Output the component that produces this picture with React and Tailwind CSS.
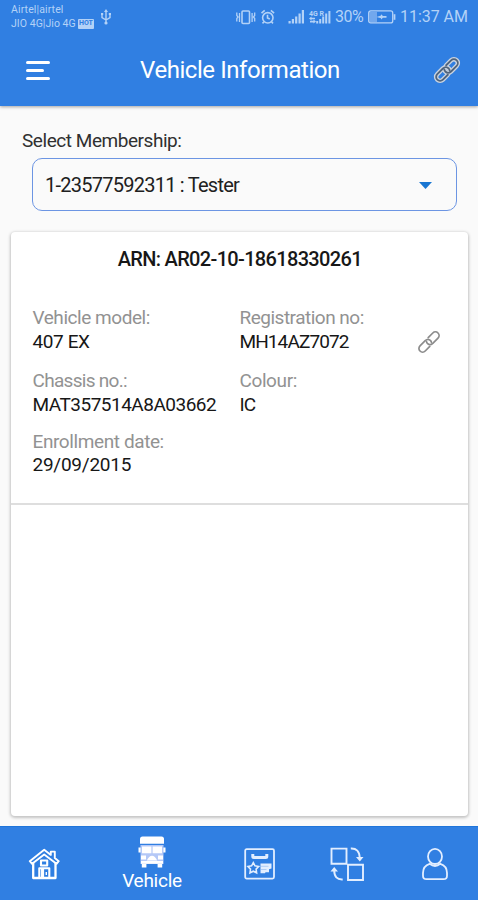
const LinkIcon = ({ className }) => (
  <svg viewBox="0 0 24 24" className={className} fill="none" stroke="currentColor" strokeWidth="1.7" strokeLinecap="round">
    <path d="M11.2 7.6 15.8 3a3.6 3.6 0 0 1 5.2 5.2l-5.2 5.2q-2.9 2.6-5.4 0-.8-.9-.9-1.9" />
    <path d="M12.8 16.4 8.2 21A3.6 3.6 0 0 1 3 15.8l5.2-5.2q2.9-2.6 5.4 0 .8.9.9 1.9" />
  </svg>
);

const OutlinedLinkIcon = () => (
  <svg viewBox="-1 -1 26 26" className="h-7 w-7" fill="none" strokeLinecap="round">
    {[
      ["#ccd5e0", 4.2],
      ["#50647c", 1.7],
    ].map(([color, width]) => (
      <g key={color} stroke={color} strokeWidth={width}>
        <path d="M11.2 7.6 15.8 3a3.6 3.6 0 0 1 5.2 5.2l-5.2 5.2q-2.9 2.6-5.4 0-.8-.9-.9-1.9" />
        <path d="M12.8 16.4 8.2 21A3.6 3.6 0 0 1 3 15.8l5.2-5.2q2.9-2.6 5.4 0 .8.9.9 1.9" />
      </g>
    ))}
  </svg>
);

const StatusIcons = () => (
  <>
    <svg viewBox="0 0 42 18" className="h-[18px] w-[42px]" fill="none" stroke="currentColor" strokeWidth="1.6">
      <rect x="8" y="3" width="7.5" height="12.5" rx="1" />
      <path d="M5.5 5v9M18.1 5v9M2.8 4.5v3L4 9l-1.2 1.5v3M20.7 4.5v3L19.5 9l1.2 1.5v3" strokeWidth="1.3" />
      <circle cx="33.8" cy="9.8" r="5.2" />
      <path d="M33.5 6.8V10l2.3 1M27.5 5.2l3.2-2.8M40.1 5.2l-3.2-2.8M30 13.8l-1.5 1.6M37.5 13.8l1.5 1.6" />
    </svg>
    <svg viewBox="0 0 44 18" className="ml-[11px] h-[18px] w-[44px]" fill="currentColor">
      <path d="M1.5 13h2.2v2.5H1.5zM4.8 11H7v4.5H4.8zM8.1 8.5h2.2v7H8.1zM11.5 5.5h2.2v10h-2.2zM14.8 2H17v13.5h-2.2z" />
      <path d="M29.2 13h2v2.5h-2zM32.2 11h2v4.5h-2zM35.2 8.5h2v7h-2zM38.2 5.5h2v10h-2zM41.4 3h2v12.5h-2z" />
      <path d="m22 10.5 2.5-2v1.2H28v1.6h-3.5v1.2zM29 13.5l-2.5-2v1.3H23v1.6h3.5v1.2z" />
      <text x="22" y="7.5" fontSize="7.5" fontWeight="bold" textLength="15" lengthAdjust="spacingAndGlyphs">4G R</text>
    </svg>
  </>
);

const UsbIcon = () => (
  <svg viewBox="0 0 12 16" className="h-4 w-3" fill="none" stroke="currentColor" strokeWidth="1.4">
    <path d="M6 2v12M2 5v3.5L6 11l4-2.5V5" />
    <path d="M6 0 4 3h4zM1 4h2.2v2H1zM8.8 4H11v2H8.8z" fill="currentColor" stroke="none" />
    <circle cx="6" cy="14" r="1.6" fill="currentColor" stroke="none" />
  </svg>
);

const BatteryIcon = () => (
  <svg viewBox="0 0 28 14" className="ml-[4px] h-[14px] w-[28px]" fill="none" stroke="currentColor" strokeWidth="1.3">
    <rect x="0.7" y="0.9" width="24" height="12" rx="2" />
    <path d="M1.5 2H9v10H1.5z" fill="currentColor" fillOpacity="0.5" stroke="none" />
    <path d="M26.5 4.2v5.6" strokeWidth="1.8" />
    <path d="M8.5 7 13 5.6V4.2l2 1.8h3.5v1.8H15l-2 1.8V8.3z" fill="currentColor" stroke="none" />
  </svg>
);

const HomeIcon = () => (
  <svg viewBox="0 0 32 32" className="h-8 w-8" fill="none" stroke="currentColor" strokeWidth="1.9" strokeLinejoin="round">
    <path d="M5.2 15V30h22.3V15" strokeWidth="2.3" />
    <path d="M16.2 1.8 1.8 13.2l2.3 2.6L16.2 6.4l12.3 9.4 2.2-2.6-3.9-3.1V3.6h-4v3.3z" />
    <path d="M13 12.5h6.2v5H13zM11.3 30v-9.7h10V30z" strokeWidth="2.1" />
    <path d="M14.5 21v9" strokeWidth="3.2" />
    <path d="M18.3 24v3" strokeWidth="1.4" />
  </svg>
);

const BusIcon = () => (
  <svg viewBox="0 0 28 32" className="h-8 w-7" fill="currentColor">
    <path d="M4.5.5h19q2.5 0 2.5 2.5v4.7H2V3Q2 .5 4.5.5z" />
    <path d="M2.5 9h23v19h-23z" fill="#b4c8f7" />
    <path d="M4 10.5h9.4v6.7H4zM14.6 10.5H24v6.7h-9.4z" />
    <path d="M.5 11.5h2.2v5H.5zM25.3 11.5h2.2v5h-2.2zM3.8 28h4.6v3.5H3.8zM19.6 28h4.6v3.5h-4.6z" />
    <path d="M3 19.5h5v4H3zM20 19.5h5v4h-5zM3 25h22v2.8H3z" />
    <path d="M8.8 24.5q2.2-4.8 5.2-4.8t5.2 4.8z" />
  </svg>
);

const CardIcon = () => (
  <svg viewBox="0 0 32 32" className="h-8 w-8" fill="none" stroke="currentColor" strokeWidth="1.8">
    <rect x="1.2" y="1.2" width="28.8" height="29.4" rx="1.5" />
    <path d="M8.8 6v2.5q0 1 1 1h12q1 0 1-1V6" strokeWidth="3" />
    <path d="m9.3 14.7 1.7 3.2 3.6.6-2.5 2.6.5 3.7-3.3-1.6L6 24.8l.5-3.7L4 18.5l3.6-.6z" strokeWidth="1.6" />
    <path d="M16.5 15.5h11v5l-2.5.8v3h-3.5l-.5.9h-4.5z" fill="currentColor" stroke="none" />
    <path d="M16.5 18.3h8M16.5 21.5h6" stroke="#8cb5ef" strokeWidth="0.6" />
  </svg>
);

const SwapIcon = () => (
  <svg viewBox="0 0 34 34" className="h-[34px] w-[34px]" fill="none" stroke="currentColor" strokeWidth="1.9">
    <path d="M1.5 1.6h15v15.2h-15zM18 17.8h15V33H18z" />
    <path d="M20.8 1.5q8.5-.5 9 9.5M12.7 32.5q-8.5.5-8.5-9.5" />
    <path d="M26 10h7.5l-3.7 4.5zM.5 24.5H8L4.2 20z" fill="currentColor" stroke="none" />
  </svg>
);

const UserIcon = () => (
  <svg viewBox="0 0 28 34" className="h-[34px] w-[28px]" fill="none" stroke="currentColor" strokeWidth="1.8">
    <ellipse cx="14" cy="9.4" rx="7" ry="7.6" />
    <path d="M8.7 16.8Q2 18.8 2 26v2.7Q2 32.2 5.5 32.2h17q3.5 0 3.5-3.5V26q0-7.2-6.7-9.2-5.3 4.4-10.6 0z" />
  </svg>
);

const Field = ({ label, value, labelClass, valueClass }) => (
  <div className="whitespace-nowrap text-[19px] leading-[23px]">
    <p className={`text-[#929292] ${labelClass}`}>{label}</p>
    <p className={`text-[#171717] ${valueClass}`}>{value}</p>
  </div>
);

export default function App() {
  return (
    <div className="flex h-[900px] w-[478px] flex-col overflow-hidden bg-[#fafafa] font-['Roboto',sans-serif]">
      <header className="flex h-[106px] shrink-0 flex-col bg-[#307fe2] text-white shadow-[0_1px_3px_rgba(0,0,0,0.35)]">
        <div className="flex h-[34px] justify-between pl-[11px] pr-[10px] text-[#b3d2f7]">
          <div className="flex">
            <div className="whitespace-nowrap pt-[2px] text-[10.5px] leading-[15px]">
              <p className="h-[14px] tracking-[0.12px]">Airtel|airtel</p>
              <div className="flex items-center">
                <span className="w-[67px] tracking-[0.05px]">JIO 4G|Jio 4G</span>
                <span className="flex h-[10px] w-[16px] items-center justify-center rounded-[1px] bg-[#b3d2f7] text-[7px] font-bold text-[#307fe2]">HOT</span>
              </div>
            </div>
            <div className="ml-[6px] pt-[9px]">
              <UsbIcon />
            </div>
          </div>
          <div className="flex h-[34px] items-center whitespace-nowrap text-[16px]">
            <StatusIcons />
            <span className="ml-[4px] w-[29px] tracking-[-0.55px]">30%</span>
            <BatteryIcon />
            <span className="ml-[4px] w-[68px] tracking-[-0.05px]">11:37 AM</span>
          </div>
        </div>
        <div className="flex h-[72px] items-center justify-between pl-[26px] pr-[17px]">
          <div className="flex w-[24px] flex-col gap-[5px]">
            <span className="h-[3px] w-[24px] rounded-full bg-white"></span>
            <span className="h-[3px] w-[18px] rounded-full bg-white"></span>
            <span className="h-[3px] w-[24px] rounded-full bg-white"></span>
          </div>
          <h1 className="pr-[3px] text-[24px] leading-7 tracking-[-0.45px] whitespace-nowrap">Vehicle Information</h1>
          <OutlinedLinkIcon />
        </div>
      </header>

      <main className="flex flex-1 flex-col pl-[11px] pr-[10px] pt-[23px]">
        <label className="h-[29px] pl-[11px] text-[19px] leading-[23px] tracking-[-0.45px] text-[#303030]">Select Membership:</label>
        <div className="ml-[21px] mr-[11px] flex h-[53px] items-center justify-between rounded-[10px] border-[1.5px] border-[#6c95e3] pl-[12px] pr-[24px]">
          <span className="pt-px text-[20px] tracking-[-0.75px] text-[#202020]">1-23577592311 : Tester</span>
          <svg viewBox="0 0 13 7" className="mt-[2px] h-[7px] w-[13px] fill-[#1976d2]">
            <path d="M0 0h13L6.5 7z" />
          </svg>
        </div>

        <section className="mt-[21px] flex h-[584px] flex-col rounded-[4px] bg-white shadow-[0_1px_3px_1px_rgba(0,0,0,0.22)]">
          <div className="h-[273px] border-b-2 border-[#dedede] pl-[21.5px] pt-[15px]">
            <h2 className="-ml-[21px] text-center text-[20px] font-medium leading-6 tracking-[-0.67px] text-[#171717]">ARN: AR02-10-18618330261</h2>
            <div className="mt-[35px] flex">
              <div className="flex w-[207px] flex-col">
                <Field label="Vehicle model:" labelClass="tracking-[-0.45px]" value="407 EX" valueClass="tracking-[-0.4px] pt-px" />
                <div className="mt-[16px]">
                  <Field label="Chassis no.:" labelClass="tracking-[-0.7px]" value="MAT357514A8A03662" valueClass="tracking-[-0.5px] pt-px" />
                </div>
                <div className="mt-[14px]">
                  <Field label="Enrollment date:" labelClass="tracking-[-0.4px]" value="29/09/2015" valueClass="tracking-[-0.25px]" />
                </div>
              </div>
              <div className="flex w-[177px] flex-col gap-[16px]">
                <Field label="Registration no:" labelClass="tracking-[-0.5px]" value="MH14AZ7072" valueClass="tracking-[-0.9px] pt-px" />
                <Field label="Colour:" labelClass="tracking-[-0.4px]" value="IC" valueClass="tracking-[-0.8px] pt-px" />
              </div>
              <LinkIcon className="mt-[24px] h-6 w-6 text-[#8c8c8c]" />
            </div>
          </div>
        </section>
      </main>

      <nav className="flex h-[74px] shrink-0 border-t border-[#1f75da] bg-[#307fe2] text-[#e2eeff]">
        <div className="flex w-[88px] items-center justify-center text-white">
          <HomeIcon />
        </div>
        <div className="flex w-[128px] flex-col items-center pt-[9px] text-white">
          <BusIcon />
          <span className="mt-px text-[19px] leading-6 tracking-[-0.25px]">Vehicle</span>
        </div>
        <div className="flex w-[87px] items-center justify-center">
          <CardIcon />
        </div>
        <div className="flex w-[88px] items-center justify-center">
          <SwapIcon />
        </div>
        <div className="flex w-[87px] items-center justify-center">
          <UserIcon />
        </div>
      </nav>
    </div>
  );
}
